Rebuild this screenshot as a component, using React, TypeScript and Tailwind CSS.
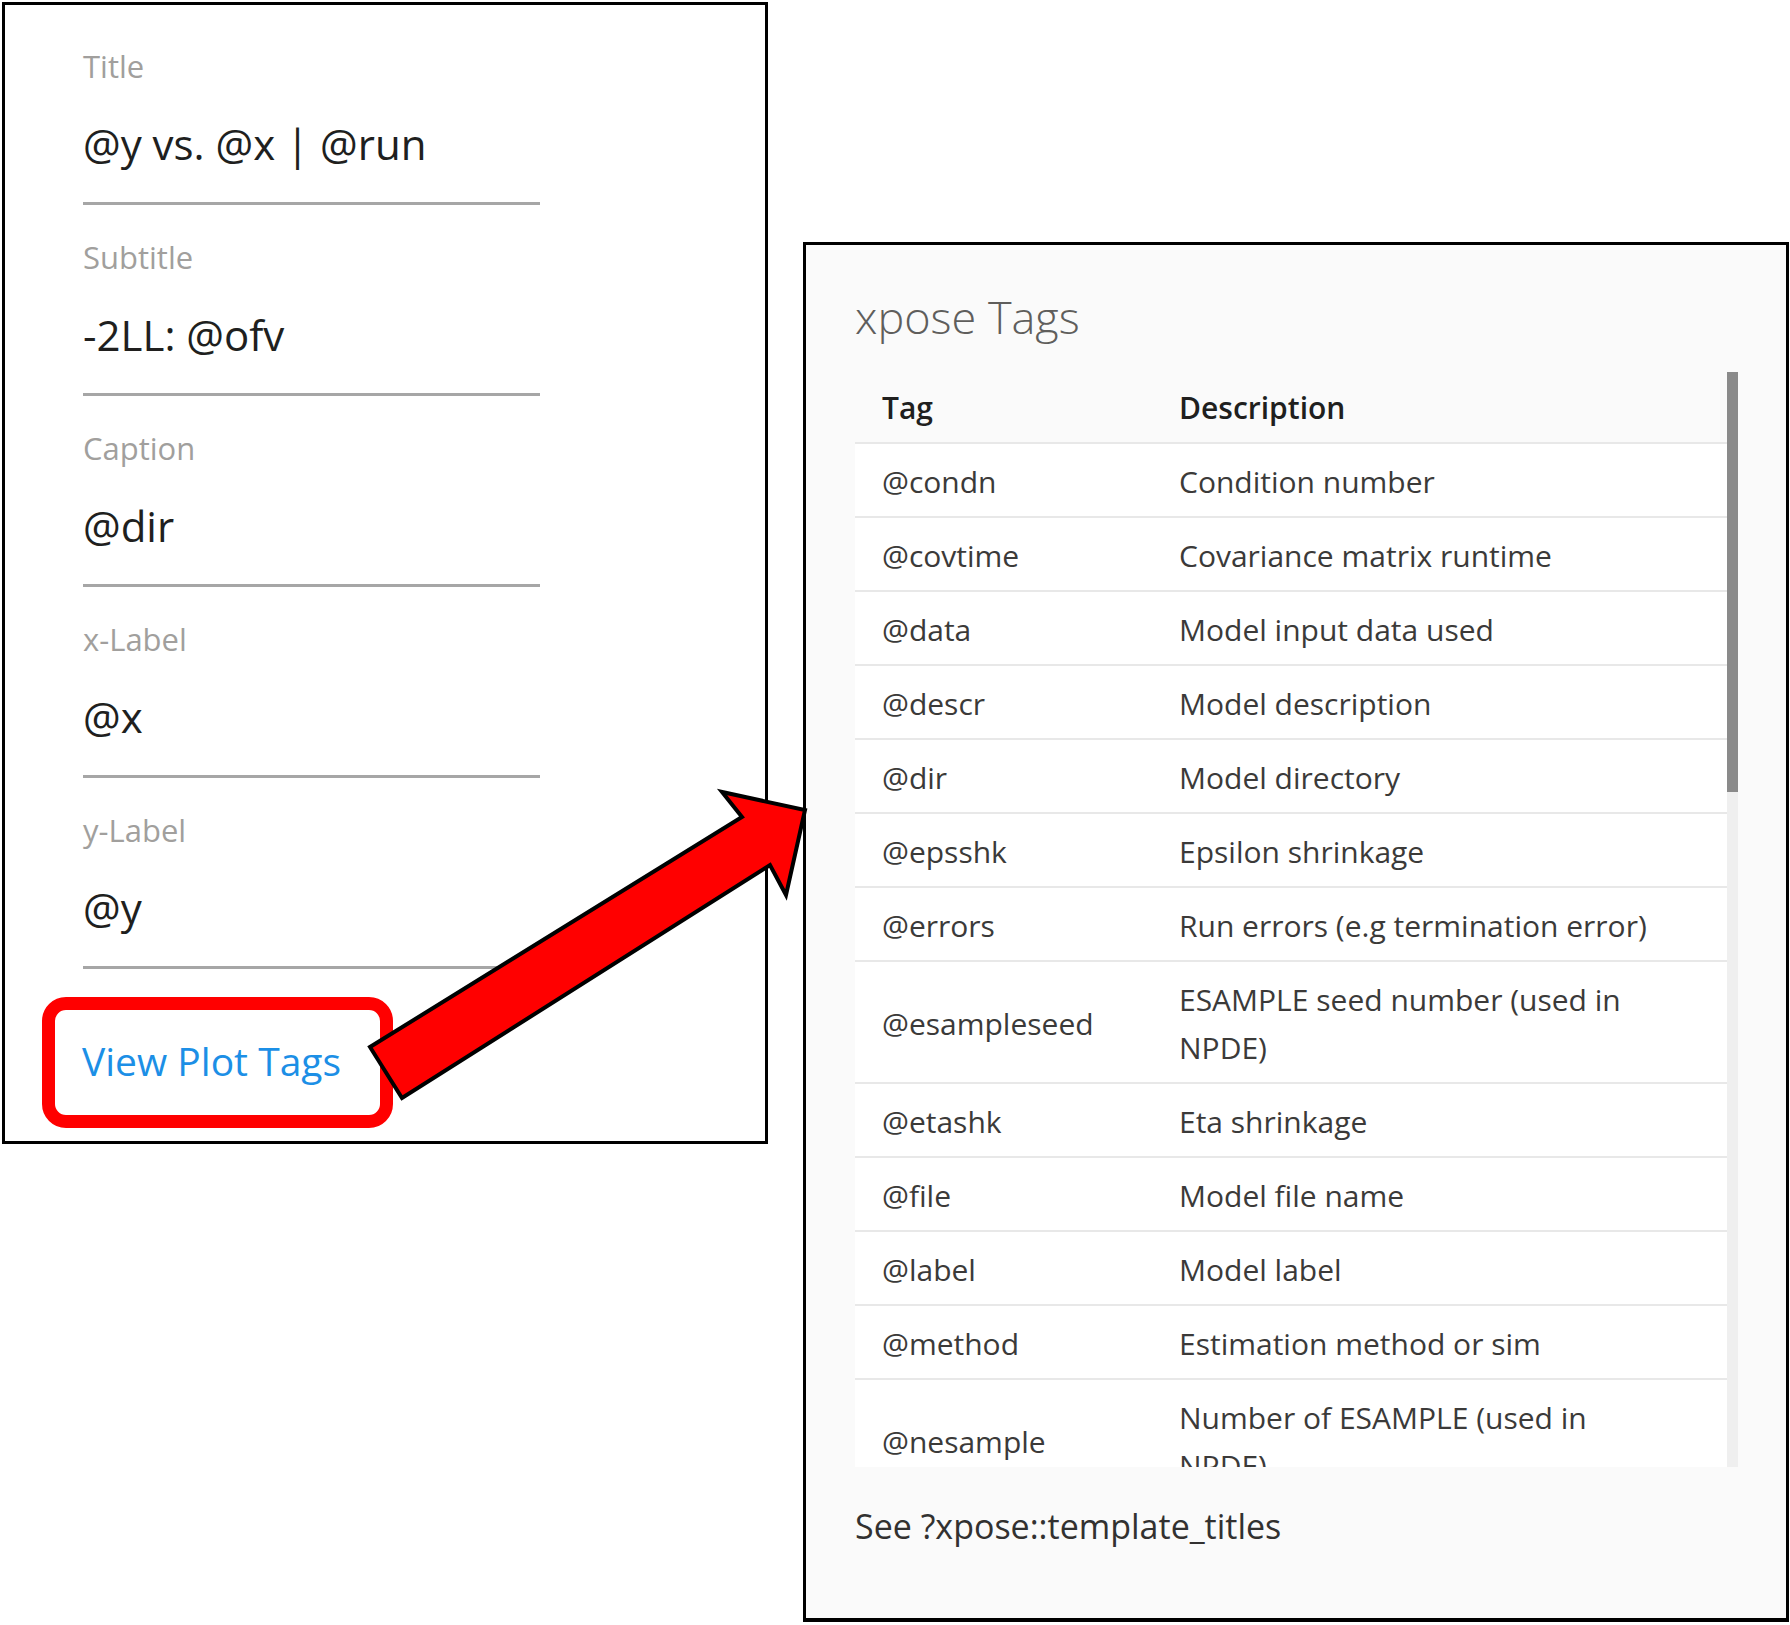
import React from "react";

const FONT = "font-['Open_Sans','Noto_Sans',sans-serif]";

const fields = [
  { label: "Title", value: "@y vs. @x | @run" },
  { label: "Subtitle", value: "-2LL: @ofv" },
  { label: "Caption", value: "@dir" },
  { label: "x-Label", value: "@x" },
  { label: "y-Label", value: "@y" },
];

// description split into visual lines, the way the list wraps them
const tags: { tag: string; desc: string[] }[] = [
  { tag: "@condn", desc: ["Condition number"] },
  { tag: "@covtime", desc: ["Covariance matrix runtime"] },
  { tag: "@data", desc: ["Model input data used"] },
  { tag: "@descr", desc: ["Model description"] },
  { tag: "@dir", desc: ["Model directory"] },
  { tag: "@epsshk", desc: ["Epsilon shrinkage"] },
  { tag: "@errors", desc: ["Run errors (e.g termination error)"] },
  { tag: "@esampleseed", desc: ["ESAMPLE seed number (used in", "NPDE)"] },
  { tag: "@etashk", desc: ["Eta shrinkage"] },
  { tag: "@file", desc: ["Model file name"] },
  { tag: "@label", desc: ["Model label"] },
  { tag: "@method", desc: ["Estimation method or sim"] },
  { tag: "@nesample", desc: ["Number of ESAMPLE (used in", "NPDE)"] },
  { tag: "@nind", desc: ["Number of individuals"] },
  { tag: "@nobs", desc: ["Number of observations"] },
];

function PlotTitleFields() {
  return (
    <div className="mt-[2px] ml-[2px] h-[1142px] w-[766px] shrink-0 border-[3px] border-black bg-white pl-[78px] pt-[41px]">
      <div className="flex w-[457px] flex-col gap-[32px]">
        {fields.map((f) => (
          <div key={f.label}>
            <div className="text-[31px] leading-[40px] text-[#a19f9d]">{f.label}</div>
            <div className="mt-[30px] whitespace-nowrap text-[42px] leading-[56px] text-[#201f1e]">{f.value}</div>
            <div className="mt-[30px] h-[3px] bg-[#a6a6a6]" />
          </div>
        ))}
      </div>

      {/* link, boxed in red */}
      <div className="mt-[28px] -ml-[41px] h-[131px] w-[351px] rounded-[24px] border-[13px] border-[#ff0000] pl-[27px] pt-[23px]">
        <span className="whitespace-nowrap text-[39px] leading-[56px] text-[#1c8fe6]">View Plot Tags</span>
      </div>
    </div>
  );
}

function TagsPanel() {
  return (
    <div className="mt-[242px] ml-[35px] h-[1380px] w-[986px] shrink-0 border-[3px] border-b-[4px] border-black bg-[#fafafa] pl-[49px] pr-[48px] pt-[42px]">
      <div className="text-[45px] font-light leading-[60px] text-[#5f5e5c]">xpose Tags</div>

      <div className="mt-[25px] flex h-[1095px]">
        <div className="flex-1 overflow-hidden">
          <div className="flex h-[72px] items-center border-b-2 border-[#e8e8e8] text-[30px] font-semibold text-[#201f1e]">
            <div className="w-[324px] shrink-0 pl-[27px]">Tag</div>
            <div className="flex-1">Description</div>
          </div>
          {tags.map((t) => (
            <div
              key={t.tag}
              className="flex items-center border-b-2 border-[#e8e8e8] bg-white pt-[14px] pb-[10px] text-[30px] leading-[48px] text-[#3b3a39]"
            >
              <div className="w-[324px] shrink-0 pl-[27px]">{t.tag}</div>
              <div className="flex-1 pr-4">
                {t.desc.map((line) => (
                  <div key={line} className="whitespace-nowrap">{line}</div>
                ))}
              </div>
            </div>
          ))}
        </div>
        {/* scrollbar */}
        <div className="w-[11px] shrink-0 bg-[#efefef]">
          <div className="h-[420px] bg-[#8a8a8a]" />
        </div>
      </div>

      <div className="mt-[35px] text-[34px] leading-[48px] text-[#323130]">See ?xpose::template_titles</div>
    </div>
  );
}

export default function App() {
  return (
    <div className={`relative flex h-[1625px] w-[1790px] items-start overflow-hidden bg-white ${FONT}`}>
      <PlotTitleFields />
      <TagsPanel />

      {/* annotation arrow */}
      <svg className="pointer-events-none absolute left-0 top-0" width="1790" height="1625" viewBox="0 0 1790 1625">
        <polygon
          points="370,1047 742,817 722,792 805,810 786,895 770,865 402,1098"
          fill="#ff0000"
          stroke="#000"
          strokeWidth="4"
          strokeLinejoin="miter"
        />
      </svg>
    </div>
  );
}
